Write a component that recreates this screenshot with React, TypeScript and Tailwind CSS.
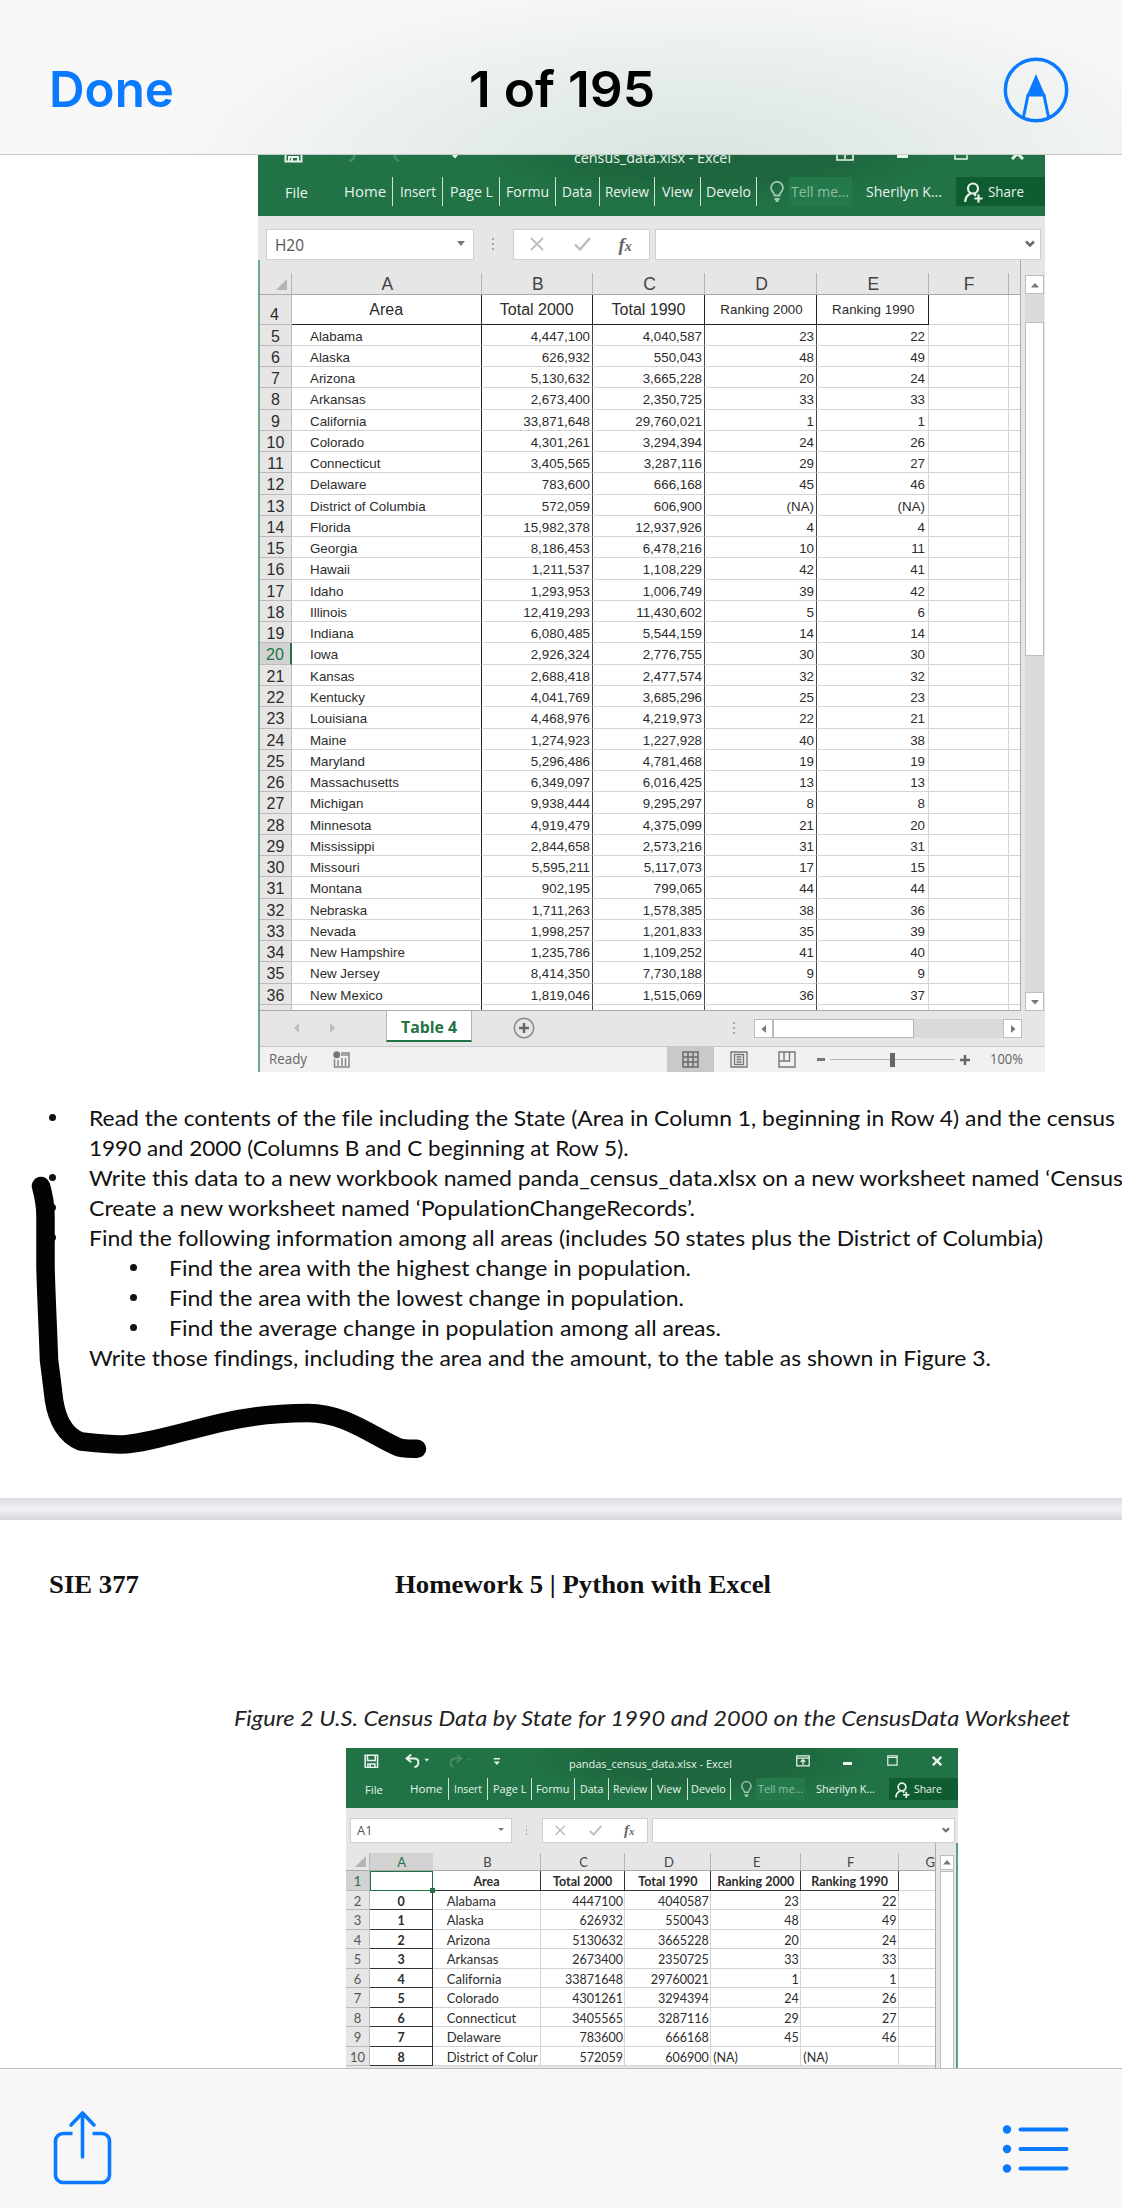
import React, { useLayoutEffect, useRef } from "react";

/** Text squeezed or stretched horizontally so that it fills the given width. */
function Fit({ w, className = "", children }: { w: number; className?: string; children: React.ReactNode }) {
  const outer = useRef<HTMLSpanElement>(null);
  const inner = useRef<HTMLSpanElement>(null);
  useLayoutEffect(() => {
    const o = outer.current;
    const i = inner.current;
    if (!o || !i) return;
    i.style.transform = "none";
    i.style.transform = `scaleX(${o.getBoundingClientRect().width / i.getBoundingClientRect().width})`;
  });
  return (
    <span ref={outer} className={`block shrink-0 ${className}`} style={{ width: w }}>
      <span ref={inner} className="inline-block origin-left whitespace-pre">
        {children}
      </span>
    </span>
  );
}

const stateRows: string[][] = `Alabama|4,447,100|4,040,587|23|22
Alaska|626,932|550,043|48|49
Arizona|5,130,632|3,665,228|20|24
Arkansas|2,673,400|2,350,725|33|33
California|33,871,648|29,760,021|1|1
Colorado|4,301,261|3,294,394|24|26
Connecticut|3,405,565|3,287,116|29|27
Delaware|783,600|666,168|45|46
District of Columbia|572,059|606,900|(NA)|(NA)
Florida|15,982,378|12,937,926|4|4
Georgia|8,186,453|6,478,216|10|11
Hawaii|1,211,537|1,108,229|42|41
Idaho|1,293,953|1,006,749|39|42
Illinois|12,419,293|11,430,602|5|6
Indiana|6,080,485|5,544,159|14|14
Iowa|2,926,324|2,776,755|30|30
Kansas|2,688,418|2,477,574|32|32
Kentucky|4,041,769|3,685,296|25|23
Louisiana|4,468,976|4,219,973|22|21
Maine|1,274,923|1,227,928|40|38
Maryland|5,296,486|4,781,468|19|19
Massachusetts|6,349,097|6,016,425|13|13
Michigan|9,938,444|9,295,297|8|8
Minnesota|4,919,479|4,375,099|21|20
Mississippi|2,844,658|2,573,216|31|31
Missouri|5,595,211|5,117,073|17|15
Montana|902,195|799,065|44|44
Nebraska|1,711,263|1,578,385|38|36
Nevada|1,998,257|1,201,833|35|39
New Hampshire|1,235,786|1,109,252|41|40
New Jersey|8,414,350|7,730,188|9|9
New Mexico|1,819,046|1,515,069|36|37`
  .split("\n")
  .map((r) => r.split("|"));

const ribbonTabs = [
  { label: "Insert", cell: "w-[50.4px]", w: 36 },
  { label: "Page L", cell: "w-[56.3px]", w: 43 },
  { label: "Formu", cell: "w-[56.3px]", w: 43 },
  { label: "Data", cell: "w-[44px]", w: 30 },
  { label: "Review", cell: "w-[55.4px]", w: 44 },
  { label: "View", cell: "w-[45.3px]", w: 31 },
  { label: "Develo", cell: "w-[56.3px]", w: 45 },
];

function Dots() {
  return (
    <span className="flex flex-col gap-[3px]">
      <i className="size-[2px] bg-[#a8a8a8]" />
      <i className="size-[2px] bg-[#a8a8a8]" />
      <i className="size-[2px] bg-[#a8a8a8]" />
    </span>
  );
}

type ChromeProps = {
  title: string;
  titleWidth: number;
  titleClass: string;
  barClass: string;
  undoColor: string;
  cell: string;
  sheetWidth: string;
};

function ExcelChrome({ title, titleWidth, titleClass, barClass, undoColor, cell, sheetWidth }: ChromeProps) {
  return (
    <div className={`font-['Open_Sans','Noto_Sans',sans-serif] ${sheetWidth}`}>
      <div className="h-[78.5px] bg-[#217346] bg-[radial-gradient(ellipse_230px_50px_at_58%_22%,#1e663d_50%,transparent_100%)] text-[15px] leading-[29px] text-[#e9f3ed]">
        <div className={`flex h-[39px] items-center ${barClass}`}>
          <svg className="ml-[26px] mb-[4px] shrink-0" width="19" height="19" viewBox="0 0 19 19" fill="none" stroke="#e9f3ed" strokeWidth="2">
            <path d="M1.5 1.5h16v16h-16z M4.5 2v6.5h10V2" />
            <path d="M5 18v-5h9v5 M8 14v4" />
          </svg>
          <svg className="ml-[34px] mb-[6px] shrink-0" width="32" height="20" viewBox="0 0 32 20" fill="none" stroke={undoColor} strokeWidth="2.5">
            <path d="M8 2 2 7l6 5 M2.5 7H12c7 0 7 10 0 11" />
            <path d="M25 7.5h6L28 11z" fill={undoColor} stroke="none" />
          </svg>
          <svg className="ml-[24px] mb-[6px] shrink-0" width="30" height="20" viewBox="0 0 30 20" fill="none" stroke="#4a8d67" strokeWidth="2.2">
            <path d="m10 2 6 5-6 5 M15.500 7H8c-7 0-8 9-2 11" />
            <path d="M23 7.500h6L26 11z" fill="#3d8259" stroke="none" />
          </svg>
          <svg className="ml-[27px] mb-[4px] shrink-0" width="10" height="14" viewBox="0 0 10 14">
            <path d="M1 3.500h8" stroke="#e9f3ed" strokeWidth="2" />
            <path d="M1 7h8l-4 4.500z" fill="#e9f3ed" />
          </svg>
          <Fit w={titleWidth} className={`mt-[3px] ${titleClass}`}>
            {title}
          </Fit>
          <svg className="ml-auto mb-[5px] shrink-0" width="18" height="15" viewBox="0 0 18 15" fill="none" stroke="#e9f3ed" strokeWidth="1.6">
            <path d="M1 1h16v13H1z M1 4h16 M9 13V6 M6 9l3-3 3 3" />
          </svg>
          <i className="ml-[43px] mt-[2px] h-[3px] w-[11px] bg-[#e9f3ed]" />
          <svg className="ml-[46px] mb-[5px] shrink-0" width="14" height="14" viewBox="0 0 14 14" fill="none" stroke="#e9f3ed" strokeWidth="1.5">
            <path d="M1 1h12v12H1z M1 3h12" />
          </svg>
          <svg className="ml-[43px] mr-[21px] mb-[5px] shrink-0" width="13" height="13" viewBox="0 0 13 13" stroke="#e9f3ed" strokeWidth="3">
            <path d="m1 1 11 11M12 1 1 12" />
          </svg>
        </div>
        <div className="flex h-[29px]">
          <Fit w={23} className="ml-[27px] mt-[1px]">
            File
          </Fit>
          <Fit w={42} className="ml-[35.5px]">
            Home
          </Fit>
          <i className="ml-[6px] w-[1.500px] bg-[#cfe3d7]" />
          {ribbonTabs.map((t) => (
            <span key={t.label} className={`flex justify-center border-r-[1.5px] border-[#cfe3d7] ${t.cell}`}>
              <Fit w={t.w}>{t.label}</Fit>
            </span>
          ))}
          <svg className="ml-[13px] mt-[4px] shrink-0" width="14" height="21" viewBox="0 0 14 21" fill="none" stroke="#9fc6b0" strokeWidth="1.800">
            <path d="M4.500 14.500C4.500 11.500 1 10.500 1 6.800a6 6 0 0 1 12 0c0 3.700-3.500 4.700-3.500 7.700z M4.500 18h5 M5.500 20h3" />
          </svg>
          <span className="ml-[5px] flex w-[63px] justify-center bg-[#24794b] text-[#8fbfa4]">
            <Fit w={58}>Tell me...</Fit>
          </span>
          <Fit w={76} className="ml-[14px]">
            Sherilyn K...
          </Fit>
          <span className="ml-auto flex w-[89px] bg-[#0f5c31] pl-[8px]">
            <svg className="mt-[5px] mr-[5px] shrink-0" width="19" height="21" viewBox="0 0 19 21" fill="none" stroke="#e9f3ed" strokeWidth="2.200">
              <circle cx="9" cy="6.500" r="5" />
              <path d="M1.200 20c0-5 2-7 5.500-8.500 M10 12l2 1.500 M14.500 12.500v8 M10.500 16.500h8" />
            </svg>
            <Fit w={36}>Share</Fit>
          </span>
        </div>
      </div>
      <div className="flex h-[44px] items-start bg-[#e6e6e6] pt-[12.5px] text-[#555]">
        <div className="ml-[8px] flex h-[31.500px] w-[208px] items-center justify-between border border-[#cfcfcf] bg-white pr-[8px] pl-[8px] text-[16.500px] leading-[22px]">
          <Fit w={cell.length > 2 ? 29 : 20} className="pt-[1px]">
            {cell}
          </Fit>
          <i className="border-x-[4.500px] border-t-[5px] border-x-transparent border-t-[#777] mb-[2px]" />
        </div>
        <div className="flex h-[31px] w-[38.500px] items-center justify-center">
          <Dots />
        </div>
        <div className="flex h-[31.500px] w-[137px] items-center border border-[#cfcfcf] bg-white pl-[15px]">
          <svg width="16" height="14" viewBox="0 0 16 14" stroke="#bdbdbd" strokeWidth="1.800">
            <path d="m2 1 12 12M14 1 2 13" />
          </svg>
          <svg className="ml-[29px]" width="17" height="14" viewBox="0 0 17 14" fill="none" stroke="#bdbdbd" strokeWidth="2.400">
            <path d="m1 7.500 5 5L16 1" />
          </svg>
          <span className="ml-[28px] font-['Liberation_Serif',serif] text-[19px] leading-none font-bold text-[#666] italic">
            f<span className="text-[14px]">x</span>
          </span>
        </div>
        <div className="ml-[5px] flex h-[31.500px] flex-1 items-center justify-end border border-[#cfcfcf] bg-white pr-[5px] mr-[4px]">
          <svg width="10" height="8" viewBox="0 0 10 8" fill="none" stroke="#6a6a6a" strokeWidth="2.600">
            <path d="m1 1.500 4 4 4-4" />
          </svg>
        </div>
      </div>
    </div>
  );
}

const cols1 = ["w-[189.5px]", "w-[111.5px]", "w-[112px]", "w-[112px]", "w-[111.5px]", "w-[80px]"];

function ArrowButton({ d, className = "" }: { d: string; className?: string }) {
  return (
    <span className={`flex shrink-0 items-center justify-center border border-[#bdbdbd] bg-white ${className}`}>
      <svg width="10" height="10" viewBox="0 0 10 10" fill="#777">
        <path d={d} />
      </svg>
    </span>
  );
}

function CensusSheet() {
  return (
    <div className="w-[787px] border-l-2 border-[#6fa888] bg-[#e6e6e6] font-['Liberation_Sans',Arial,sans-serif] text-[#2c2c2c]">
      <div className="flex h-[751px]">
        <div className="h-full w-[761px] overflow-hidden border-r-[1.5px] border-b-[1.5px] border-[#aaa]">
          <div className="flex h-[34.500px] border-b border-[#aaa] pt-[13px] text-[17.500px] leading-[22px] text-[#444]">
            <span className="flex w-[32px] items-end justify-end border-r border-[#b5b5b5] pr-[4px] pb-[4px]">
              <i className="border-b-[11px] border-l-[11px] border-b-[#b5b5b5] border-l-transparent" />
            </span>
            {"ABCDEF".split("").map((c, i) => (
              <span key={c} className={`border-r border-[#b5b5b5] pl-[2px] text-center ${cols1[i]}`}>
                {c}
              </span>
            ))}
          </div>
          <div className="flex h-[30px] bg-white text-center leading-[29px]">
            <span className="w-[32px] shrink-0 border-r border-b border-[#bbb] bg-[#e6e6e6] pt-[7px] pr-[2px] text-[16px] leading-[25px]">4</span>
            <span className={`border-r-[1.5px] border-b-[1.5px] border-[#222] text-[16px] ${cols1[0]}`}>Area</span>
            <span className={`border-r-[1.5px] border-b-[1.5px] border-[#222] text-[16px] ${cols1[1]}`}>Total 2000</span>
            <span className={`border-r-[1.5px] border-b-[1.5px] border-[#222] text-[16px] ${cols1[2]}`}>Total 1990</span>
            <span className={`border-r-[1.5px] border-b-[1.5px] border-[#222] pl-[2px] text-[13.33px] ${cols1[3]}`}>Ranking 2000</span>
            <span className={`border-r-[1.5px] border-b-[1.5px] border-[#222] pl-[2px] text-[13.33px] ${cols1[4]}`}>Ranking 1990</span>
            <span className={`border-r border-b border-[#d4d4d4] ${cols1[5]}`} />
            <span className="flex-1 border-b border-[#d4d4d4]" />
          </div>
          {stateRows.map((r, n) => (
            <div key={r[0]} className="flex h-[21.28px] bg-white text-right text-[13.33px] leading-[24px] whitespace-nowrap">
              <span
                className={
                  n === 15
                    ? "w-[32px] shrink-0 border-r-2 border-b border-r-[#217346] border-b-[#bbb] bg-[#d2d2d2] text-center text-[16px] leading-[23px] text-[#217346]"
                    : "w-[32px] shrink-0 border-r border-b border-[#bbb] bg-[#e6e6e6] text-center text-[16px] leading-[23px]"
                }
              >
                {n + 5}
              </span>
              <span className={`border-r-[1.5px] border-b border-r-[#222] border-b-[#d4d4d4] pl-[18px] text-left ${cols1[0]}`}>{r[0]}</span>
              <span className={`border-r-[1.5px] border-b border-r-[#444] border-b-[#d4d4d4] pr-[2px] ${cols1[1]}`}>{r[1]}</span>
              <span className={`border-r-[1.5px] border-b border-r-[#444] border-b-[#d4d4d4] pr-[2px] ${cols1[2]}`}>{r[2]}</span>
              <span className={`border-r-[1.5px] border-b border-r-[#444] border-b-[#d4d4d4] pr-[2px] ${cols1[3]}`}>{r[3]}</span>
              <span className={`border-r border-b border-[#d4d4d4] pr-[2.500px] ${cols1[4]}`}>{r[4]}</span>
              <span className={`border-r border-b border-[#d4d4d4] ${cols1[5]}`} />
              <span className="flex-1 border-b border-[#d4d4d4]" />
            </div>
          ))}
          <div className="flex h-[8px] bg-white">
            <span className="w-[32px] shrink-0 border-r border-[#bbb] bg-[#e6e6e6]" />
            <span className={`border-r-[1.5px] border-[#222] ${cols1[0]}`} />
            <span className={`border-r-[1.5px] border-[#444] ${cols1[1]}`} />
            <span className={`border-r-[1.5px] border-[#444] ${cols1[2]}`} />
            <span className={`border-r-[1.5px] border-[#444] ${cols1[3]}`} />
            <span className={`border-r border-[#d4d4d4] ${cols1[4]}`} />
            <span className={`border-r border-[#d4d4d4] ${cols1[5]}`} />
          </div>
        </div>
        <div className="ml-[4px] mt-[15px] flex w-[19px] flex-col bg-[#dadada]">
          <ArrowButton className="h-[19px]" d="M1 7.500h8L5 3z" />
          <span className="mt-[28px] h-[334px] border border-[#bdbdbd] bg-white" />
          <ArrowButton className="mt-auto h-[19px]" d="M1 3h8L5 7.500z" />
        </div>
      </div>
      <div className="flex h-[35px] items-start font-['Open_Sans',sans-serif]">
        <svg className="mt-[12px] ml-[34px]" width="42" height="10" viewBox="0 0 42 10" fill="#bcbcbc">
          <path d="M5 0v10L0 5z M36 0v10l5-5z" />
        </svg>
        <span className="ml-[50px] flex h-[31px] w-[86px] items-center justify-center border-x border-b-[2.500px] border-x-[#b5b5b5] border-b-[#217346] bg-white pt-[4px] text-[15.500px] font-bold text-[#217346]">
          <Fit w={56}>Table 4</Fit>
        </span>
        <svg className="ml-[41px] mt-[6px]" width="22" height="22" viewBox="0 0 22 22" fill="none" stroke="#8a8a8a" strokeWidth="1.500">
          <circle cx="11" cy="11" r="9.700" />
          <path d="M11 6v10M6 11h10" stroke="#666" strokeWidth="2.500" />
        </svg>
        <span className="mt-[11px] ml-[198px]">
          <Dots />
        </span>
        <span className="mt-[8px] ml-[19px] flex h-[19px] w-[268px] bg-[#dadada]">
          <ArrowButton className="w-[19px]" d="M7 1v8L2.500 5z" />
          <span className="w-[141px] border border-[#b5b5b5] bg-white" />
          <ArrowButton className="ml-auto w-[19px]" d="M3 1v8l4.500-4z" />
        </span>
      </div>
      <div className="flex h-[26px] items-center border-t border-[#c9c9c9] bg-[#f1f1f1] font-['Open_Sans',sans-serif] text-[14.500px] leading-[20px] text-[#666]">
        <Fit w={38} className="mb-[2px] ml-[9px]">
          Ready
        </Fit>
        <svg className="ml-[26px]" width="17" height="17" viewBox="0 0 17 17" fill="none" stroke="#888" strokeWidth="1.500">
          <path d="M8 2h8v14H1.500V8 M8 4h8 M5 9v6 M9 7v8 M12.500 7v8" />
          <circle cx="3.700" cy="3.700" r="3.500" fill="#777" stroke="none" />
        </svg>
        <span className="ml-auto flex h-full w-[47px] items-center justify-center bg-[#c9c9c9]">
          <svg width="17" height="17" viewBox="0 0 17 17" fill="none" stroke="#6a6a6a" strokeWidth="1.500">
            <path d="M1 1h15v15H1z M6 1v15 M11 1v15 M1 6h15 M1 11h15" />
          </svg>
        </span>
        <svg className="ml-[15.500px]" width="18" height="17" viewBox="0 0 18 17" fill="none" stroke="#777" strokeWidth="1.400">
          <path d="M1 1h16v15H1z M4.500 3.500h9v10h-9z M6.500 6h5 M6.500 8.500h5 M6.500 11h5" />
        </svg>
        <svg className="ml-[30px]" width="18" height="17" viewBox="0 0 18 17" fill="none" stroke="#777" strokeWidth="1.400">
          <path d="M1 1h16v15H1z M6 1v9 M1 10h10.500V1" />
        </svg>
        <i className="ml-[21px] h-[3px] w-[8px] bg-[#777]" />
        <span className="ml-[5px] flex h-[14px] w-[125px] items-center">
          <i className="h-px w-[60px] bg-[#b5b5b5]" />
          <i className="h-[14px] w-[5px] bg-[#666]" />
          <i className="h-px w-[60px] bg-[#b5b5b5]" />
        </span>
        <svg className="ml-[5px]" width="10" height="10" viewBox="0 0 10 10" stroke="#666" strokeWidth="2.500">
          <path d="M5 0v10M0 5h10" />
        </svg>
        <Fit w={33} className="mr-[22.500px] mb-[2px] ml-[20px]">
          100%
        </Fit>
      </div>
    </div>
  );
}

const cols2 = ["w-[63.3px]", "w-[107.7px]", "w-[84.7px]", "w-[85.8px]", "w-[90.2px]", "w-[97.8px]", "w-[36px]"];

function PandasSheet() {
  return (
    <div className="flex h-[226px] border-r-2 border-[#5d9e7b] bg-[#e6e6e6] font-['Lato','Open_Sans',sans-serif] text-[12.500px] text-[#2c2c2c] [font-variant-ligatures:none]">
      <div className="w-[590px] border-r-[1.500px] border-[#aaa]">
        <div className="flex h-[28.500px] border-b border-[#aaa] pt-[10px] text-center text-[13px] leading-[18px] text-[#444]">
          <span className="flex w-[24px] shrink-0 items-end justify-end border-r border-[#b5b5b5] pr-[3px] pb-[3px]">
            <i className="border-b-[11px] border-l-[11px] border-b-[#b5b5b5] border-l-transparent" />
          </span>
          <span className={`bg-[#d2d2d2] text-[#217346] ${cols2[0]}`}>A</span>
          {"BCDEF".split("").map((c, i) => (
            <span key={c} className={`border-r border-[#b5b5b5] pl-[2px] ${cols2[i + 1]}`}>
              {c}
            </span>
          ))}
          <span className={`text-right ${cols2[6]}`}>G</span>
        </div>
        <div className="flex h-[19.500px] bg-white text-center font-bold leading-[21px]">
          <span className="w-[24px] shrink-0 border-r border-b border-[#bbb] bg-[#d2d2d2] text-[13px] font-normal text-[#217346]">1</span>
          <span className={`relative border-[1.500px] border-[#217346] ${cols2[0]}`}>
            <i className="absolute -right-[3px] -bottom-[3px] size-[5px] bg-[#217346]" />
          </span>
          {["Area", "Total 2000", "Total 1990", "Ranking 2000", "Ranking 1990"].map((c, i) => (
            <span key={c} className={`border-r-[1.500px] border-b-[1.500px] border-[#333] whitespace-nowrap ${cols2[i + 1]}`}>
              {c}
            </span>
          ))}
          <span className={`border-b border-[#d4d4d4] ${cols2[6]}`} />
        </div>
        {stateRows.slice(0, 9).map((r, n) => (
          <div key={r[0]} className="flex h-[19.520px] bg-white text-right leading-[21px]">
            <span className="w-[24px] shrink-0 border-r border-b border-[#bbb] bg-[#e6e6e6] text-center text-[13px] text-[#555]">{n + 2}</span>
            <span className={`border-r-[1.500px] border-b-[1.500px] border-[#333] text-center font-bold ${cols2[0]}`}>{n}</span>
            <span className={`overflow-hidden border-r border-b border-[#d4d4d4] pl-[13.500px] text-left text-[13px] whitespace-nowrap ${cols2[1]}`}>
              {n === 8 ? "District of Colur" : r[0]}
            </span>
            <span className={`border-r border-b border-[#d4d4d4] pr-[1.500px] ${cols2[2]}`}>{r[1].replaceAll(",", "")}</span>
            <span className={`border-r border-b border-[#d4d4d4] pr-[1.500px] ${cols2[3]}`}>{r[2].replaceAll(",", "")}</span>
            <span className={`border-r border-b border-[#d4d4d4] ${n === 8 ? "pl-[2px] text-left" : "pr-[1.500px]"} ${cols2[4]}`}>{r[3]}</span>
            <span className={`border-r border-b border-[#d4d4d4] ${n === 8 ? "pl-[2px] text-left" : "pr-[1.500px]"} ${cols2[5]}`}>{r[4]}</span>
            <span className={`border-b border-[#d4d4d4] ${cols2[6]}`} />
          </div>
        ))}
      </div>
      <div className="mt-[12px] ml-[4px] flex w-[14px] flex-col">
        <ArrowButton className="h-[15px]" d="M1 7.500h8L5 3z" />
        <span className="mt-px flex-1 border border-[#bdbdbd] bg-white" />
      </div>
    </div>
  );
}

const instructions = [
  { kind: "top", w: 1026, text: "Read the contents of the file including the State (Area in Column 1, beginning in Row 4) and the census" },
  { kind: "plain", w: 539.5, text: "1990 and 2000 (Columns B and C beginning at Row 5)." },
  { kind: "top", w: 1034, text: "Write this data to a new workbook named panda_census_data.xlsx on a new worksheet named ‘Census" },
  { kind: "top", w: 606, text: "Create a new worksheet named ‘PopulationChangeRecords’." },
  { kind: "top", w: 954, text: "Find the following information among all areas (includes 50 states plus the District of Columbia)" },
  { kind: "sub", w: 522, text: "Find the area with the highest change in population." },
  { kind: "sub", w: 515, text: "Find the area with the lowest change in population." },
  { kind: "sub", w: 552, text: "Find the average change in population among all areas." },
  { kind: "plain", w: 902, text: "Write those findings, including the area and the amount, to the table as shown in Figure 3." },
];

export default function App() {
  return (
    <div className="flex h-[2208px] w-[1122px] flex-col overflow-hidden bg-white">
      <header className="relative z-10 flex h-[154.500px] shrink-0 items-end justify-between border-b-[1.500px] border-[#c3c9c6] bg-[#f8f8f8] bg-[radial-gradient(ellipse_540px_190px_at_62%_108%,#d8e5de_0%,#e4ece8_40%,#f8f8f800_100%)] pr-[53px] pl-[49px] font-['Inter',sans-serif] text-[50px] leading-[60px] font-semibold">
        <Fit w={125} className="mb-[35px] text-[#0a7aff]">
          Done
        </Fit>
        <Fit w={186} className="mb-[35px] ml-[-4px] text-black">
          1 of 195
        </Fit>
        <svg className="mb-[31px] ml-[50px]" width="66" height="66" viewBox="0 0 66 66" fill="none" stroke="#0a7aff" strokeWidth="3.500">
          <circle cx="33" cy="33" r="30.700" />
          <path d="M20.500 60 25 38h16l4.500 22" strokeWidth="3" strokeLinejoin="round" />
          <path d="M33 17 24 38h18z" fill="#0a7aff" stroke="none" />
        </svg>
      </header>

      <section className="relative -mt-[17px] h-[1360.500px] shrink-0">
        <div className="ml-[258px] w-[787px]">
          <ExcelChrome
            title="census_data.xlsx - Excel"
            titleWidth={157}
            titleClass="ml-[114px]"
            barClass="pb-[3px]"
            undoColor="#4a8d67"
            cell="H20"
            sheetWidth="w-[787px]"
          />
          <CensusSheet />
        </div>
        <ul className="mt-[30.500px] font-['Lato','Open_Sans',sans-serif] text-[20.700px] text-[#111] [font-variant-ligatures:none]">
          {instructions.map((l) => (
            <li key={l.text} className={`flex h-[30.020px] items-center leading-[30px] ${l.kind === "sub" ? "pl-[130px]" : "pl-[49px]"}`}>
              <span className={`flex shrink-0 items-center ${l.kind === "sub" ? "w-[39px]" : "w-[40px]"}`}>
                {l.kind !== "plain" && <i className="size-[6.500px] rounded-full bg-[#111]" />}
              </span>
              <Fit w={l.w}>{l.text}</Fit>
            </li>
          ))}
        </ul>
        <svg className="absolute top-[1030px] left-0" width="440" height="300" viewBox="0 1168 440 300" fill="none" stroke="#050203" strokeWidth="18.500" strokeLinecap="round" strokeLinejoin="round">
          <path d="M41 1186C44 1197 45.500 1204 45.500 1216V1267C46 1290 48 1330 49 1360C51 1375 52 1384 54 1400C57 1420 66 1436 81 1441.500C95 1443 108 1444.500 121 1444.500C145 1444 185 1431 222 1422.500C250 1416 280 1413 308 1413C345 1413 372 1436 398 1447C402 1449 409 1448.700 417 1448.700" />
        </svg>
      </section>

      <div className="h-[21.500px] shrink-0 bg-gradient-to-b from-[#dcdce1] via-[#f1f1f7] via-50% to-[#d6d6dc]" />

      <section className="flex h-[548.500px] shrink-0 flex-col overflow-hidden">
        <div className="mt-[50px] flex pl-[49px] font-['Liberation_Serif','Times_New_Roman',serif] text-[26px] leading-[30px] font-bold text-[#111]">
          <Fit w={90}>SIE 377</Fit>
          <Fit w={376} className="ml-[256px]">
            Homework 5 | Python with Excel
          </Fit>
        </div>
        <div className="mt-[103px] ml-[234px] font-['Lato',sans-serif] text-[21px] leading-[30px] text-[#222] italic [font-variant-ligatures:none]">
          <Fit w={836}>Figure 2 U.S. Census Data by State for 1990 and 2000 on the CensusData Worksheet</Fit>
        </div>
        <div className="mt-[15px] ml-[346px] w-[612px] shrink-0 overflow-hidden">
          <div className="-ml-[2px] w-[614px]">
            <div className="[zoom:0.7763]">
              <ExcelChrome
                title="pandas_census_data.xlsx - Excel"
                titleWidth={210}
                titleClass="ml-[88px] pt-[2px]"
                barClass=""
                undoColor="#e9f3ed"
                cell="A1"
                sheetWidth="w-[791px]"
              />
            </div>
          </div>
          <PandasSheet />
        </div>
      </section>

      <footer className="relative z-10 flex flex-1 items-start justify-between border-t-[1.500px] border-[#bdbdbd] bg-[#f7f7f8] pr-[53px] pl-[52px]">
        <svg className="mt-[41px]" width="61" height="76" viewBox="0 0 61 76" fill="none" stroke="#0a7aff" strokeWidth="3.600" strokeLinecap="round" strokeLinejoin="round">
          <path d="M20.500 23.500H11a7.500 7.500 0 0 0-7.500 7.500v34a7.500 7.500 0 0 0 7.500 7.500h39a7.500 7.500 0 0 0 7.500-7.500V31a7.500 7.500 0 0 0-7.500-7.500h-9.500" strokeLinecap="butt" />
          <path d="M30.500 47V3.500 M19 15 30.500 3l11.500 12" />
        </svg>
        <svg className="mt-[54px]" width="67" height="52" viewBox="0 0 67 52" fill="#0a7aff">
          <circle cx="5" cy="6.500" r="4.200" />
          <circle cx="5" cy="26" r="4.200" />
          <circle cx="5" cy="45.500" r="4.200" />
          <path d="M18.500 6.500H64.500M18.500 26H64.500M18.500 45.500H64.500" stroke="#0a7aff" strokeWidth="4" strokeLinecap="round" />
        </svg>
      </footer>
    </div>
  );
}
